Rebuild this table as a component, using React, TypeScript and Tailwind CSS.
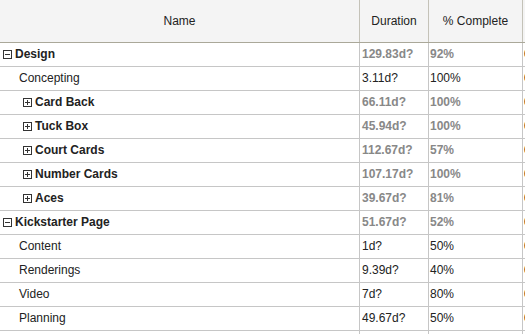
import React from "react";

type Row = {
  name: string;
  level: number;
  icon?: "plus" | "minus";
  bold?: boolean;
  dur: string;
  pct: string;
};

const rows: Row[] = [
  { name: "Design", level: 0, icon: "minus", bold: true, dur: "129.83d?", pct: "92%" },
  { name: "Concepting", level: 1, dur: "3.11d?", pct: "100%" },
  { name: "Card Back", level: 1, icon: "plus", bold: true, dur: "66.11d?", pct: "100%" },
  { name: "Tuck Box", level: 1, icon: "plus", bold: true, dur: "45.94d?", pct: "100%" },
  { name: "Court Cards", level: 1, icon: "plus", bold: true, dur: "112.67d?", pct: "57%" },
  { name: "Number Cards", level: 1, icon: "plus", bold: true, dur: "107.17d?", pct: "100%" },
  { name: "Aces", level: 1, icon: "plus", bold: true, dur: "39.67d?", pct: "81%" },
  { name: "Kickstarter Page", level: 0, icon: "minus", bold: true, dur: "51.67d?", pct: "52%" },
  { name: "Content", level: 1, dur: "1d?", pct: "50%" },
  { name: "Renderings", level: 1, dur: "9.39d?", pct: "40%" },
  { name: "Video", level: 1, dur: "7d?", pct: "80%" },
  { name: "Planning", level: 1, dur: "49.67d?", pct: "50%" },
  { name: "", level: 1, dur: "", pct: "" },
];

function Toggle({ type }: { type: "plus" | "minus" }) {
  return (
    <svg width="9" height="9" viewBox="0 0 9 9" className="shrink-0">
      <rect x="0.5" y="0.5" width="8" height="8" fill="white" stroke="#333" strokeWidth="1" />
      <line x1="2" y1="4.5" x2="7" y2="4.5" stroke="#333" strokeWidth="1" />
      {type === "plus" && <line x1="4.5" y1="2" x2="4.5" y2="7" stroke="#333" strokeWidth="1" />}
    </svg>
  );
}

export default function App() {
  return (
    <div
      className="w-[525px] h-[334px] overflow-hidden bg-white text-[12px] text-[#222]"
      style={{ fontFamily: '"Liberation Sans", Arial, sans-serif' }}
    >
      <div className="flex h-[43px] bg-[#f4f4f4] border-b border-[#aaa899]">
        <div className="w-[360px] shrink-0 border-r border-[#c4c2b8] flex items-center justify-center">
          Name
        </div>
        <div className="w-[69px] shrink-0 border-r border-[#c4c2b8] flex items-center justify-center">
          Duration
        </div>
        <div className="w-[94px] shrink-0 border-r border-[#c4c2b8] flex items-center justify-center">
          % Complete
        </div>
        <div className="flex-1" />
      </div>
      {rows.map((r, i) => (
        <div key={i} className="flex h-[24px] border-b border-[#c6c6c6]">
          <div
            className={
              "w-[360px] shrink-0 border-r border-[#c6c6c6] flex items-center pb-[1px] " +
              (r.level === 0 ? "pl-[3px]" : r.icon ? "pl-[23px]" : "pl-[19px]")
            }
          >
            {r.icon && <Toggle type={r.icon} />}
            <span className={r.bold ? "font-bold ml-[3px]" : ""}>{r.name}</span>
          </div>
          <div
            className={
              "w-[69px] shrink-0 border-r border-[#c6c6c6] flex items-center pl-[2px] pb-[1px] " +
              (r.bold ? "font-bold text-[#888]" : "")
            }
          >
            {r.dur}
          </div>
          <div
            className={
              "w-[94px] shrink-0 border-r border-[#c6c6c6] flex items-center pl-[1px] pb-[1px] " +
              (r.bold ? "font-bold text-[#888]" : "")
            }
          >
            {r.pct}
          </div>
          <div className="flex-1 flex items-center pl-[1px] pb-[1px] text-black">
            {r.name ? "0" : ""}
          </div>
        </div>
      ))}
    </div>
  );
}
